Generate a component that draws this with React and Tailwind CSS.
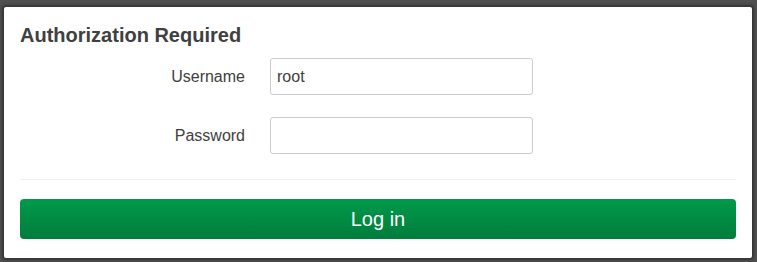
import React from 'react';

const fields = [
    { label: 'Username', value: 'root', type: 'text' },
    { label: 'Password', value: '', type: 'password' },
];

export default function App() {
    return (
        <div className="w-[757px] h-[262px] bg-[#4f4f4f] pt-[7px] pl-[4px] pr-[5px] pb-[4px] font-['Liberation_Sans',Arial,sans-serif]">
            <div className="h-[251px] bg-white rounded-[2px] shadow-[0_0_3px_2px_rgba(0,0,0,0.35)] px-[16px] pt-[16px]">
                <h2 className="text-[20px] leading-[24px] font-bold text-[#404040]">Authorization Required</h2>
                <div className="flex flex-col gap-[22px] mt-[11px]">
                    {fields.map(f => (
                        <div key={f.label} className="flex items-center">
                            <label className="w-[250px] text-right pr-[25px] text-[16px] text-[#404040]">{f.label}</label>
                            <input
                                type={f.type}
                                defaultValue={f.value}
                                className="w-[263px] h-[37px] border border-[#ccc] rounded-[3px] px-[6px] text-[16px] text-[#404040] outline-none"
                            />
                        </div>
                    ))}
                </div>
                <div className="border-t border-[#eee] mt-[25px]"></div>
                <button className="mt-[19px] w-full h-[40px] rounded-[4px] bg-gradient-to-b from-[#009a4b] to-[#007d3b] text-white text-[20px]">
                    Log in
                </button>
            </div>
        </div>
    );
}
